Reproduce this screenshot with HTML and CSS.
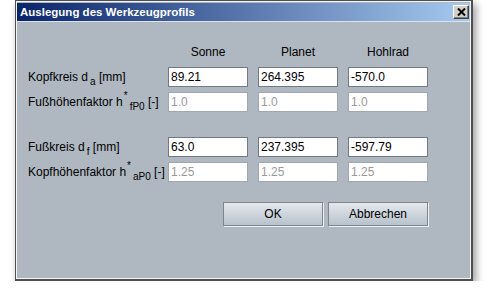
FILE: index.html
```html
<!DOCTYPE html>
<html lang="de">
  <head>
    <meta charset="UTF-8" />
    <title>Auslegung des Werkzeugprofils</title>
    <link rel="stylesheet" href="styles.css">
  </head>
  <body>
    <div class="window">
      <div class="frame">
        <div class="titlebar">
          <span class="title">Auslegung des Werkzeugprofils</span>
          <button class="close">
            <svg width="9" height="8" viewBox="0 0 9 8">
              <path d="M1 0.5 L8 7.5 M8 0.5 L1 7.5" stroke="#000" stroke-width="2" fill="none" />
            </svg>
          </button>
        </div>

        <div class="content">
          <div class="grid">
            <div></div>
            <div class="head">Sonne</div>
            <div class="head">Planet</div>
            <div class="head">Hohlrad</div>

            <div class="label">Kopfkreis d<sub>a</sub> [mm]</div>
            <input type="text" value="89.21" />
            <input type="text" value="264.395" />
            <input type="text" value="-570.0" />

            <div class="label">Fußhöhenfaktor h<sup>*</sup><sub>fP0</sub> [-]</div>
            <input type="text" value="1.0" disabled />
            <input type="text" value="1.0" disabled />
            <input type="text" value="1.0" disabled />

            <div class="spacer"></div>

            <div class="label">Fußkreis d<sub>f</sub> [mm]</div>
            <input type="text" value="63.0" />
            <input type="text" value="237.395" />
            <input type="text" value="-597.79" />

            <div class="label">Kopfhöhenfaktor h<sup>*</sup><sub>aP0</sub> [-]</div>
            <input type="text" value="1.25" disabled />
            <input type="text" value="1.25" disabled />
            <input type="text" value="1.25" disabled />
          </div>

          <div class="buttons">
            <button class="btn">OK</button>
            <button class="btn">Abbrechen</button>
          </div>
        </div>
      </div>
    </div>
  </body>
</html>
```

FILE: styles.css
```css
body {
  margin: 0;
  padding: 0;
  background: #fff;
  font-family: "Liberation Sans", Arial, sans-serif;
  font-size: 12px;
  color: #000;
}

/* Dialog window with its classic frame */
.window {
  box-sizing: border-box;
  width: 458px;
  height: 281px;
  margin-left: 15px;
  border: 1px solid #4f4f4f;
  border-right-width: 2px;
  border-bottom-width: 2px;
  background: #afb8c1;
  box-shadow: 3px 4px 8px rgba(0, 0, 0, 0.4);
}

.frame {
  box-sizing: border-box;
  height: 100%;
  border: 1px solid #f2f4f6;
  padding-top: 1px;
}

.titlebar {
  display: flex;
  align-items: center;
  justify-content: space-between;
  height: 18px;
  padding-left: 3px;
  border-bottom: 1px solid #dde2e7;
  background: linear-gradient(to right, #0a246a, #a6caf0);
}

.title {
  color: #fff;
  font-weight: bold;
  font-size: 11.5px;
  line-height: 18px;
  white-space: nowrap;
}

.close {
  box-sizing: border-box;
  width: 16px;
  height: 14px;
  margin-right: 1px;
  padding: 0;
  display: flex;
  align-items: center;
  justify-content: center;
  background: #d4d0c8;
  border: 1px solid;
  border-color: #fff #404040 #404040 #fff;
  box-shadow: inset -1px -1px 0 #808080;
}

/* Form area */
.content {
  padding: 20px 0 0 11px;
}

.grid {
  display: grid;
  width: 400px;
  grid-template-columns: 130px 80px 80px 80px;
  grid-template-rows: 20px 20px 20px 15px 20px 20px;
  column-gap: 10px;
  row-gap: 5px;
}

.head {
  text-align: center;
  line-height: 20px;
}

.label {
  white-space: nowrap;
  line-height: 20px;
}

.label sub,
.label sup {
  font-size: 10px;
  line-height: 0;
}

.label sub {
  vertical-align: -4px;
  margin-left: 2px;
}

.label sup {
  vertical-align: 7px;
  margin-left: 1px;
}

.spacer {
  grid-column: 1 / -1;
}

input {
  box-sizing: border-box;
  width: 80px;
  height: 20px;
  margin: 0;
  padding: 0 2px;
  border: 1px solid #717a84;
  border-radius: 0;
  background: #fff;
  font-family: "Liberation Sans", Arial, sans-serif;
  font-size: 12px;
  color: #000;
  outline: none;
}

input:disabled {
  border-color: #9fa7af;
  background: #fff;
  color: #9a9a9a;
}

.buttons {
  display: flex;
  justify-content: flex-end;
  gap: 5px;
  width: 400px;
  margin-top: 20px;
}

.btn {
  box-sizing: border-box;
  width: 100px;
  height: 24px;
  padding: 0;
  border: 1px solid #7c8690;
  border-radius: 0;
  background: linear-gradient(to bottom, #e3e8ed, #b8c2cc);
  box-shadow: 1px 1px 0 #eef1f4;
  font-family: "Liberation Sans", Arial, sans-serif;
  font-size: 12px;
  color: #000;
}
```
